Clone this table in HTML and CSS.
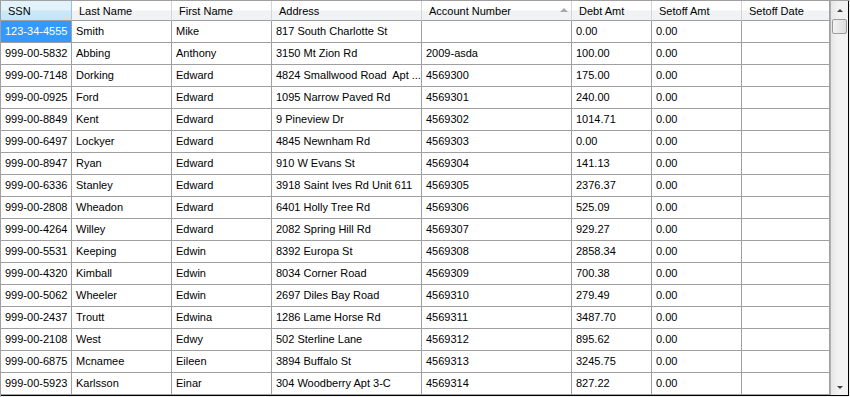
FILE: index.html
```html
<!DOCTYPE html>
<html>
<head>
<meta charset="utf-8">
<link rel="stylesheet" href="styles.css">
</head>
<body>
<div class="frame">
  <div class="inner">
    <div class="grid">
      <div class="row head">
        <div class="h sel">SSN</div>
        <div class="h">Last Name</div>
        <div class="h">First Name</div>
        <div class="h">Address</div>
        <div class="h sorted">Account Number<span class="sort"></span></div>
        <div class="h">Debt Amt</div>
        <div class="h">Setoff Amt</div>
        <div class="h last">Setoff Date</div>
      </div>
      <div class="row"><div class="c selcell">123-34-4555</div><div class="c">Smith</div><div class="c">Mike</div><div class="c">817 South Charlotte St</div><div class="c"></div><div class="c">0.00</div><div class="c">0.00</div><div class="c"></div></div>
      <div class="row"><div class="c">999-00-5832</div><div class="c">Abbing</div><div class="c">Anthony</div><div class="c">3150 Mt Zion Rd</div><div class="c">2009-asda</div><div class="c">100.00</div><div class="c">0.00</div><div class="c"></div></div>
      <div class="row"><div class="c">999-00-7148</div><div class="c">Dorking</div><div class="c">Edward</div><div class="c pre">4824 Smallwood Road  Apt ...</div><div class="c">4569300</div><div class="c">175.00</div><div class="c">0.00</div><div class="c"></div></div>
      <div class="row"><div class="c">999-00-0925</div><div class="c">Ford</div><div class="c">Edward</div><div class="c">1095 Narrow Paved Rd</div><div class="c">4569301</div><div class="c">240.00</div><div class="c">0.00</div><div class="c"></div></div>
      <div class="row"><div class="c">999-00-8849</div><div class="c">Kent</div><div class="c">Edward</div><div class="c">9 Pineview Dr</div><div class="c">4569302</div><div class="c">1014.71</div><div class="c">0.00</div><div class="c"></div></div>
      <div class="row"><div class="c">999-00-6497</div><div class="c">Lockyer</div><div class="c">Edward</div><div class="c">4845 Newnham Rd</div><div class="c">4569303</div><div class="c">0.00</div><div class="c">0.00</div><div class="c"></div></div>
      <div class="row"><div class="c">999-00-8947</div><div class="c">Ryan</div><div class="c">Edward</div><div class="c">910 W Evans St</div><div class="c">4569304</div><div class="c">141.13</div><div class="c">0.00</div><div class="c"></div></div>
      <div class="row"><div class="c">999-00-6336</div><div class="c">Stanley</div><div class="c">Edward</div><div class="c">3918 Saint Ives Rd Unit 611</div><div class="c">4569305</div><div class="c">2376.37</div><div class="c">0.00</div><div class="c"></div></div>
      <div class="row"><div class="c">999-00-2808</div><div class="c">Wheadon</div><div class="c">Edward</div><div class="c">6401 Holly Tree Rd</div><div class="c">4569306</div><div class="c">525.09</div><div class="c">0.00</div><div class="c"></div></div>
      <div class="row"><div class="c">999-00-4264</div><div class="c">Willey</div><div class="c">Edward</div><div class="c">2082 Spring Hill Rd</div><div class="c">4569307</div><div class="c">929.27</div><div class="c">0.00</div><div class="c"></div></div>
      <div class="row"><div class="c">999-00-5531</div><div class="c">Keeping</div><div class="c">Edwin</div><div class="c">8392 Europa St</div><div class="c">4569308</div><div class="c">2858.34</div><div class="c">0.00</div><div class="c"></div></div>
      <div class="row"><div class="c">999-00-4320</div><div class="c">Kimball</div><div class="c">Edwin</div><div class="c">8034 Corner Road</div><div class="c">4569309</div><div class="c">700.38</div><div class="c">0.00</div><div class="c"></div></div>
      <div class="row"><div class="c">999-00-5062</div><div class="c">Wheeler</div><div class="c">Edwin</div><div class="c">2697 Diles Bay Road</div><div class="c">4569310</div><div class="c">279.49</div><div class="c">0.00</div><div class="c"></div></div>
      <div class="row"><div class="c">999-00-2437</div><div class="c">Troutt</div><div class="c">Edwina</div><div class="c">1286 Lame Horse Rd</div><div class="c">4569311</div><div class="c">3487.70</div><div class="c">0.00</div><div class="c"></div></div>
      <div class="row"><div class="c">999-00-2108</div><div class="c">West</div><div class="c">Edwy</div><div class="c">502 Sterline Lane</div><div class="c">4569312</div><div class="c">895.62</div><div class="c">0.00</div><div class="c"></div></div>
      <div class="row"><div class="c">999-00-6875</div><div class="c">Mcnamee</div><div class="c">Eileen</div><div class="c">3894 Buffalo St</div><div class="c">4569313</div><div class="c">3245.75</div><div class="c">0.00</div><div class="c"></div></div>
      <div class="row"><div class="c">999-00-5923</div><div class="c">Karlsson</div><div class="c">Einar</div><div class="c">304 Woodberry Apt 3-C</div><div class="c">4569314</div><div class="c">827.22</div><div class="c">0.00</div><div class="c"></div></div>
    </div>
    <div class="vscroll">
      <div class="sbtn"><span class="arrow up"></span></div>
      <div class="thumb"></div>
      <div class="track"></div>
      <div class="sbtn"><span class="arrow down"></span></div>
    </div>
  </div>
</div>
</body>
</html>
```
FILE: styles.css
```css
* { box-sizing: border-box; }
html, body { margin: 0; padding: 0; background: #ffffff; }
body { font-family: "Liberation Sans", Arial, sans-serif; font-size: 11px; color: #000; }

.frame {
  width: 850px;
  height: 397px;
  border-top: 1px solid #a0a0a0;
  border-left: 1px solid #a0a0a0;
  border-right: 1px solid #f0f0f0;
  border-bottom: 1px solid #f0f0f0;
}
.inner {
  height: 100%;
  display: flex;
  border-right: 1px solid #000;
  border-bottom: 1px solid #000;
}
.grid {
  width: 829px;
  display: flex;
  flex-direction: column;
  background: #fff;
}
.row {
  display: grid;
  grid-template-columns: 71px 100px 100px 150px 150px 80px 90px 88px;
  height: 22px;
  flex: none;
}
.row.head { height: 20px; }

.c {
  border-right: 1px solid #a0a0a0;
  border-bottom: 1px solid #a0a0a0;
  padding-left: 4px;
  line-height: 21px;
  white-space: nowrap;
  overflow: hidden;
}
.c.pre { white-space: pre; }
.c.selcell { background: #3399ff; color: #fff; }

.h {
  position: relative;
  border-right: 1px solid #d5d5d5;
  border-bottom: 1px solid #a0a0a0;
  background: linear-gradient(#ffffff 0%, #ffffff 45%, #f1f2f4 55%, #f1f2f4 100%);
  padding-left: 7px;
  padding-top: 1px;
  line-height: 18px;
  white-space: nowrap;
  overflow: hidden;
}
.h.sel {
  background: linear-gradient(#e3f3fc 0%, #e3f3fc 45%, #cbe8f7 55%, #c4e4f5 100%);
  border-right: 1px solid #96c4e2;
}
.h.last { border-right: 1px solid #a0a0a0; }
.sort {
  position: absolute;
  left: 138px;
  top: 7px;
  width: 0;
  height: 0;
  border-left: 4px solid transparent;
  border-right: 4px solid transparent;
  border-bottom: 4px solid #a8a8a8;
}

.vscroll {
  width: 18px;
  display: flex;
  flex-direction: column;
  border-left: 1px solid #b0b0b0;
  background: linear-gradient(90deg, #e6e6e6, #f2f2f2 40%, #f2f2f2);
}
.sbtn {
  height: 17px;
  flex: none;
  display: flex;
  align-items: center;
  justify-content: center;
}
.arrow {
  width: 0;
  height: 0;
  border-left: 3px solid transparent;
  border-right: 3px solid transparent;
}
.arrow.up { border-bottom: 3px solid #404040; margin-top: 1px; }
.arrow.down { border-top: 3px solid #404040; margin-top: 2px; }
.thumb {
  flex: none;
  height: 15px;
  margin: 1px 1px 0 1px;
  border: 1px solid #9c9c9c;
  border-radius: 2px;
  background: linear-gradient(90deg, #f3f3f3, #e8e8e8 50%, #dcdcdc);
}
.track { flex: 1; }
```
